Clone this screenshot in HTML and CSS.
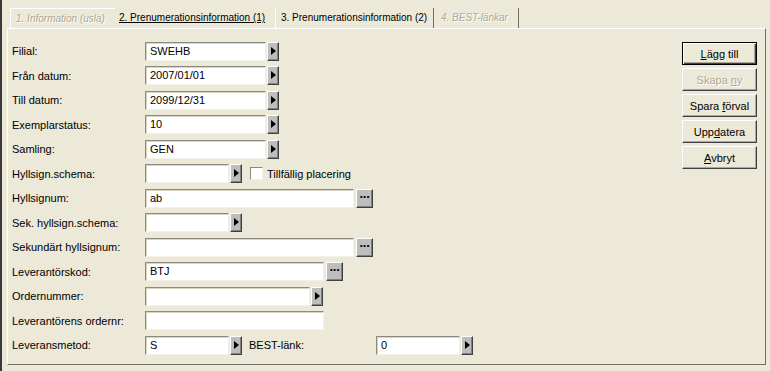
FILE: index.html
```html
<!DOCTYPE html>
<html lang="sv">
<head>
    <meta charset="UTF-8">
    <title>Prenumerationsinformation</title>
    <link rel="stylesheet" href="styles.css">
</head>
<body>

<div class="window">
    <div class="tabs">
        <div class="tab tab-first disabled">1. Information (usla)</div>
        <div class="tab tab-link">2. Prenumerationsinformation (1)</div>
        <div class="tab tab-current">3. Prenumerationsinformation (2)</div>
        <div class="tab tab-last disabled">4. BEST-länkar</div>
    </div>

    <div class="panel">
        <div class="form">
            <label>Filial:</label>
            <div class="field"><div class="input w-wide">SWEHB</div><span class="arrow"></span></div>

            <label>Från datum:</label>
            <div class="field"><div class="input w-wide">2007/01/01</div><span class="arrow"></span></div>

            <label>Till datum:</label>
            <div class="field"><div class="input w-wide">2099/12/31</div><span class="arrow"></span></div>

            <label>Exemplarstatus:</label>
            <div class="field"><div class="input w-wide">10</div><span class="arrow"></span></div>

            <label>Samling:</label>
            <div class="field"><div class="input w-wide">GEN</div><span class="arrow"></span></div>

            <label>Hyllsign.schema:</label>
            <div class="field">
                <div class="input w-short"></div><span class="arrow"></span>
                <span class="check"></span><span class="check-label">Tillfällig placering</span>
            </div>

            <label>Hyllsignum:</label>
            <div class="field"><div class="input w-long">ab</div><span class="dots">···</span></div>

            <label>Sek. hyllsign.schema:</label>
            <div class="field"><div class="input w-short"></div><span class="arrow"></span></div>

            <label>Sekundärt hyllsignum:</label>
            <div class="field"><div class="input w-long"></div><span class="dots">···</span></div>

            <label>Leverantörskod:</label>
            <div class="field"><div class="input w-supplier">BTJ</div><span class="dots">···</span></div>

            <label>Ordernummer:</label>
            <div class="field"><div class="input w-order"></div><span class="arrow"></span></div>

            <label>Leverantörens ordernr:</label>
            <div class="field"><div class="input w-ordernr"></div></div>

            <label>Leveransmetod:</label>
            <div class="field">
                <div class="input w-short">S</div><span class="arrow"></span>
                <span class="inline-label">BEST-länk:</span>
                <div class="input w-short">0</div><span class="arrow"></span>
            </div>
        </div>

        <div class="actions">
            <button class="default"><u>L</u>ägg till</button>
            <button disabled>Skapa <u>n</u>y</button>
            <button>Spara <u>f</u>örval</button>
            <button>Upp<u>d</u>atera</button>
            <button><u>A</u>vbryt</button>
        </div>
    </div>
</div>

</body>
</html>
```

FILE: styles.css
```css
body {
    margin: 0;
    background-color: #ece9d8;
    font-family: "Liberation Sans", Arial, sans-serif;
    font-size: 11px;
    color: #000;
}
.window {
    height: 371px;
    box-sizing: border-box;
    padding: 8px 4px 5px 5px;
    border-left: 2px solid #3a3a3a;
}
.tabs {
    display: flex;
    height: 20px;
    padding-left: 3px;
}
.tab {
    box-sizing: border-box;
    padding-left: 5px;
    font-size: 10px;
    line-height: 20px;
    white-space: nowrap;
}
.tab-first {
    width: 105px;
    border-top: 1px solid #fff;
    border-left: 1px solid #fff;
}
.tab-link {
    width: 160px;
    padding-left: 4px;
    text-decoration: underline;
}
.tab-current {
    width: 159px;
    border-left: 1px solid #fff;
    border-right: 1px solid #716f64;
}
.tab-last {
    width: 85px;
    padding-left: 7px;
    border-right: 1px solid #716f64;
}
.disabled {
    color: #aca899;
    font-style: italic;
    text-shadow: 1px 1px 0 #fff;
}
.panel {
    display: flex;
    justify-content: space-between;
    height: 337px;
    box-sizing: border-box;
    border-top: 1px solid #fff;
    border-left: 1px solid #fff;
    border-right: 1px solid #716f64;
    border-bottom: 1px solid #716f64;
}
.form {
    display: grid;
    grid-template-columns: 133px auto;
    grid-auto-rows: 20px;
    row-gap: 4.5px;
    padding: 12px 0 0 4px;
    align-content: start;
}
.form label {
    line-height: 20px;
}
.field {
    display: flex;
    align-items: center;
}
.input {
    height: 19px;
    box-sizing: border-box;
    background-color: #fff;
    border-top: 1px solid #8c8a7c;
    border-left: 1px solid #8c8a7c;
    border-right: 1px solid #f4f2e8;
    border-bottom: 1px solid #f4f2e8;
    box-shadow: inset 1px 1px 0 #d8d5c5;
    padding-left: 4px;
    line-height: 17px;
}
.w-wide { width: 121px; }
.w-short { width: 84px; }
.w-long { width: 209px; }
.w-supplier { width: 179px; }
.w-order { width: 165px; }
.w-ordernr { width: 179px; }
.arrow, .dots {
    position: relative;
    height: 19px;
    box-sizing: border-box;
    margin-left: 1px;
    background-color: #bdbdbd;
    border-top: 1px solid #fff;
    border-left: 1px solid #fff;
    border-right: 1px solid #404040;
    border-bottom: 1px solid #404040;
    box-shadow: inset -1px -1px 0 #808080;
}
.arrow {
    width: 12px;
}
.arrow::after {
    content: "";
    position: absolute;
    left: 3px;
    top: 4px;
    border-left: 5px solid #000;
    border-top: 4px solid transparent;
    border-bottom: 4px solid transparent;
}
.dots {
    width: 17px;
    margin-left: 2px;
    font-size: 13px;
    font-weight: bold;
    line-height: 14px;
    text-align: center;
    letter-spacing: -1px;
}
.check {
    width: 13px;
    height: 13px;
    box-sizing: border-box;
    margin-left: 8px;
    background-color: #fff;
    border-top: 1px solid #8c8a7c;
    border-left: 1px solid #8c8a7c;
    border-right: 1px solid #f4f2e8;
    border-bottom: 1px solid #f4f2e8;
}
.check-label {
    margin-left: 4px;
}
.inline-label {
    width: 127px;
    margin-left: 7px;
}
.actions {
    display: flex;
    flex-direction: column;
    gap: 3px;
    padding: 13px 8px 0 0;
}
.actions button {
    width: 75px;
    height: 23px;
    font: inherit;
    color: #000;
    background-color: #ece9d8;
    border-top: 1px solid #fff;
    border-left: 1px solid #fff;
    border-right: 1px solid #404040;
    border-bottom: 1px solid #404040;
    box-shadow: inset -1px -1px 0 #aca899;
    padding: 0;
}
.actions button.default {
    border: 1px solid #000;
    box-shadow: inset 1px 1px 0 #fff, inset -1px -1px 0 #404040, inset -2px -2px 0 #aca899;
}
.actions button:disabled {
    color: #aca899;
    text-shadow: 1px 1px 0 #fff;
}
```
